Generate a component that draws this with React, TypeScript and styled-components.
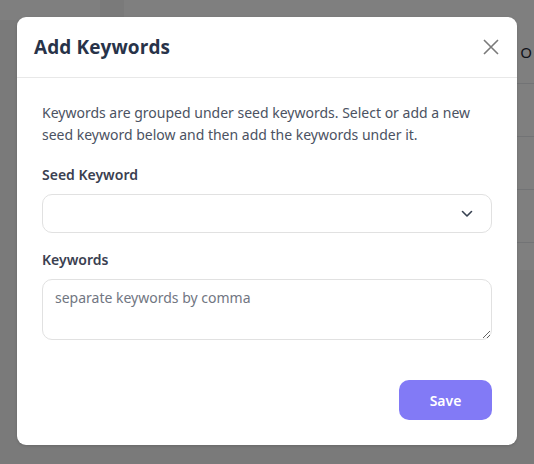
import React from "react";
import styled, { createGlobalStyle } from "styled-components";

const GlobalStyle = createGlobalStyle`
  html, body {
    margin: 0;
    padding: 0;
    height: 100%;
  }
  body {
    font-family: "Noto Sans", "Liberation Sans", sans-serif;
    background: #f4f4f4;
  }
  * {
    box-sizing: border-box;
  }
`;

const Page = styled.div`
  position: relative;
  width: 534px;
  height: 464px;
  overflow: hidden;
  display: flex;
  flex-direction: column;
  background: #f4f4f4;
`;

const TopBar = styled.div`
  height: 20px;
  display: flex;
  background: #ffffff;
`;

const TopBarCell = styled.div<{ $w: number; $shade?: boolean }>`
  width: ${(p) => p.$w}px;
  background: ${(p) => (p.$shade ? "#f4f4f4" : "#ffffff")};
`;

const PageBody = styled.div`
  flex: 1;
  display: flex;
  justify-content: flex-end;
`;

const Table = styled.div`
  width: 400px;
  height: 250px;
  background: #ffffff;
  display: flex;
  flex-direction: column;
`;

const TableHead = styled.div`
  height: 64px;
  display: flex;
  align-items: center;
  justify-content: flex-end;
  padding-right: 2px;
  border-bottom: 1px solid #e5e7eb;
  font-size: 15px;
  color: #1f2937;
`;

const TableRow = styled.div`
  height: 53px;
  border-bottom: 1px solid #e5e7eb;
`;

const Overlay = styled.div`
  position: absolute;
  inset: 0;
  background: rgba(0, 0, 0, 0.5);
  display: flex;
  align-items: flex-start;
  justify-content: center;
  padding-top: 17px;
`;

const Modal = styled.div`
  width: 500px;
  background: #ffffff;
  border-radius: 9px;
  display: flex;
  flex-direction: column;
  box-shadow: 0 1px 3px rgba(0, 0, 0, 0.15);
`;

const ModalHeader = styled.div`
  height: 61px;
  display: flex;
  align-items: center;
  justify-content: space-between;
  padding: 0 16px 0 17px;
  border-bottom: 1px solid #e8e8e8;
`;

const Title = styled.h2`
  margin: 0;
  font-family: "Open Sans", "Liberation Sans", sans-serif;
  font-weight: 700;
  font-size: 19px;
  color: #283349;
  letter-spacing: 0.1px;
`;

const CloseButton = styled.button`
  border: 0;
  background: transparent;
  padding: 0;
  width: 20px;
  height: 20px;
  display: flex;
  align-items: center;
  justify-content: center;
  cursor: pointer;
  color: #7a7a7a;
`;

const ModalBody = styled.div`
  padding: 24px 25px 25px;
  display: flex;
  flex-direction: column;
`;

const Intro = styled.p`
  margin: 0 0 19px;
  font-size: 14px;
  line-height: 22px;
  color: #4b5262;
`;

const Label = styled.label`
  display: block;
  font-size: 14px;
  font-weight: 600;
  color: #3a4050;
  margin-bottom: 10px;
`;

const SelectBox = styled.div`
  height: 39px;
  border: 1px solid #e1e1e1;
  border-radius: 10px;
  display: flex;
  align-items: center;
  justify-content: flex-end;
  padding-right: 18px;
  color: #374151;
  margin-bottom: 17px;
`;

const TextArea = styled.textarea`
  display: block;
  width: 100%;
  height: 61px;
  border: 1px solid #e1e1e1;
  border-radius: 10px;
  padding: 8px 12px;
  font-family: "Noto Sans", "Liberation Sans", sans-serif;
  font-size: 14px;
  line-height: 20px;
  color: #374151;
  resize: vertical;
  outline: none;
  &::placeholder {
    color: #717682;
  }
`;

const Footer = styled.div`
  display: flex;
  justify-content: flex-end;
  margin-top: 40px;
`;

const SaveButton = styled.button`
  width: 93px;
  height: 40px;
  border: 0;
  border-radius: 10px;
  background: #827af6;
  color: #ffffff;
  font-family: "Noto Sans", "Liberation Sans", sans-serif;
  font-size: 14px;
  font-weight: 600;
  cursor: pointer;
`;

export default function App() {
  return (
    <Page>
      <GlobalStyle />
      <TopBar>
        <TopBarCell $w={100} />
        <TopBarCell $w={24} $shade />
        <TopBarCell $w={410} />
      </TopBar>
      <PageBody>
        <Table>
          <TableHead>O</TableHead>
          <TableRow />
          <TableRow />
          <TableRow />
        </Table>
      </PageBody>
      <Overlay>
        <Modal>
          <ModalHeader>
            <Title>Add Keywords</Title>
            <CloseButton aria-label="Close">
              <svg width="18" height="18" viewBox="0 0 18 18" fill="none">
                <path d="M2 2L16 16M16 2L2 16" stroke="currentColor" strokeWidth="1.6" />
              </svg>
            </CloseButton>
          </ModalHeader>
          <ModalBody>
            <Intro>
              Keywords are grouped under seed keywords. Select or add a new seed keyword below and then add the keywords under it.
            </Intro>
            <Label>Seed Keyword</Label>
            <SelectBox>
              <svg width="12" height="8" viewBox="0 0 12 8" fill="none">
                <path d="M1.5 1.5L6 6L10.5 1.5" stroke="currentColor" strokeWidth="1.6" strokeLinecap="round" strokeLinejoin="round" />
              </svg>
            </SelectBox>
            <Label>Keywords</Label>
            <TextArea placeholder="separate keywords by comma" />
            <Footer>
              <SaveButton>Save</SaveButton>
            </Footer>
          </ModalBody>
        </Modal>
      </Overlay>
    </Page>
  );
}
